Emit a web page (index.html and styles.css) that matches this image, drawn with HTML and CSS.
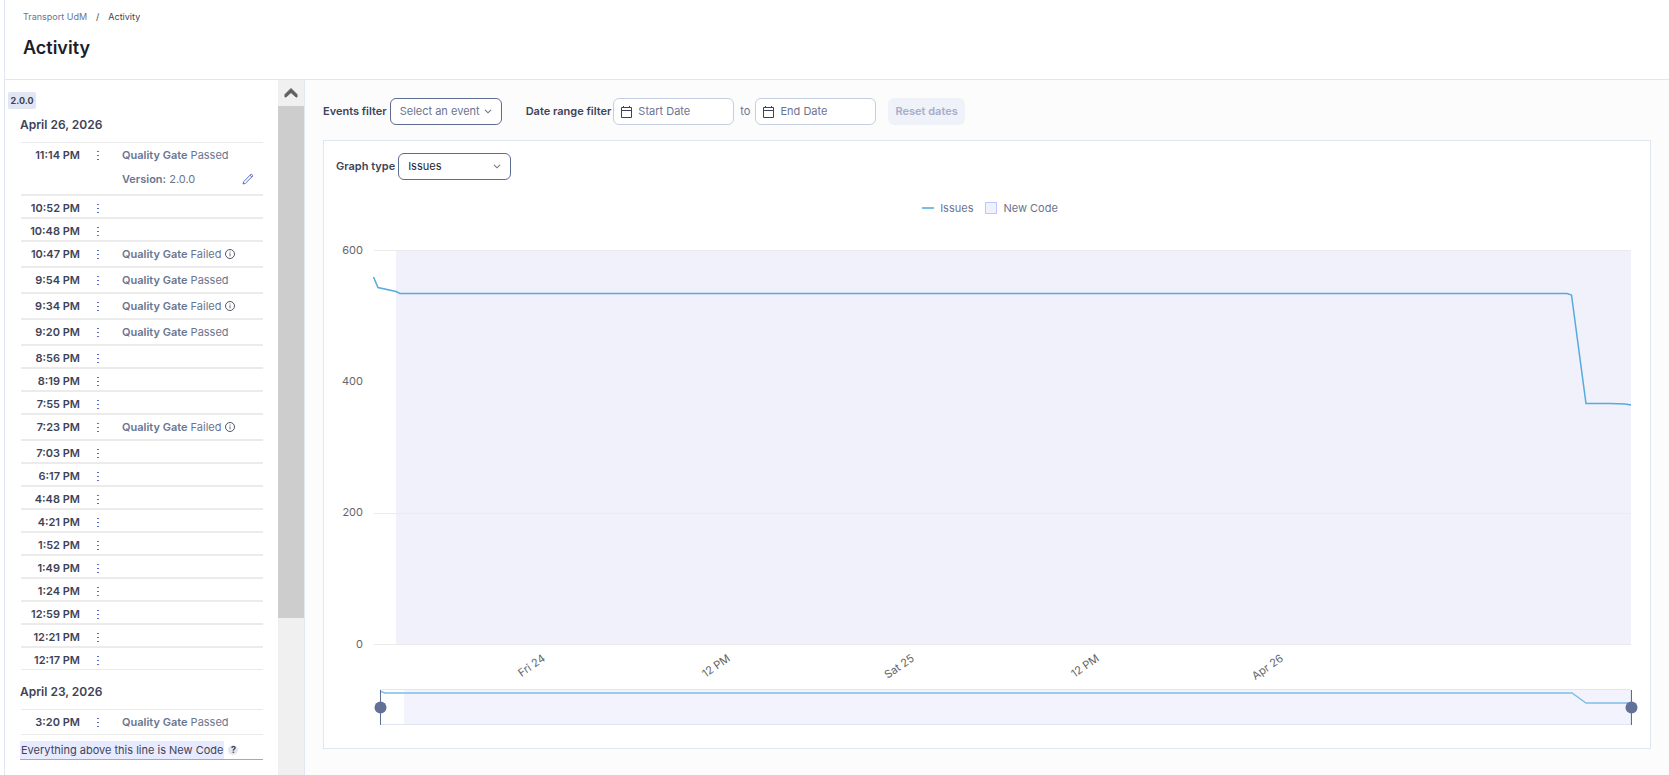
FILE: index.html
```html
<!DOCTYPE html>
<html lang="en">

<head>
    <meta charset="UTF-8">
    <title>Activity</title>
    <link rel="stylesheet" href="styles.css">
</head>

<body>
    <svg class="defs" aria-hidden="true">
        <symbol id="dots" viewBox="0 0 2 10">
            <rect x="0" y="0" width="2" height="1" />
            <rect x="0" y="4" width="2" height="1" />
            <rect x="0" y="8" width="2" height="1" />
        </symbol>
        <symbol id="info" viewBox="0 0 10 10">
            <circle cx="5" cy="5" r="4.500" fill="none" stroke="#3e4357" stroke-width=".9" />
            <path d="M5 4.300v3M5 2.500v1" stroke="#3e4357" stroke-width=".8" />
        </symbol>
        <symbol id="chevron" viewBox="0 0 8 5">
            <path d="M1 .8l3 3 3-3" fill="none" stroke="#6a7590" stroke-width="1.1" />
        </symbol>
        <symbol id="calendar" viewBox="0 0 12 12">
            <path d="M.5 1.5h10v10H.5zM.5 4.5h10M2.5 0v1.5M8.5 0v1.5" fill="none" stroke="#3e4357" />
        </symbol>
    </svg>

    <div class="page">
        <header class="header">
            <nav class="breadcrumbs">
                <a href="#">Transport UdM</a>
                <span class="slash">/</span>
                <a class="current" href="#">Activity</a>
            </nav>
            <h1>Activity</h1>
        </header>

        <div class="body">
            <aside class="sidebar">
                <div class="analyses">
                    <span class="version">2.0.0</span>
                    <h2>April 26, 2026</h2>
                    <ul id="day1"></ul>
                    <h2 class="later">April 23, 2026</h2>
                    <ul id="day2"></ul>
                    <div class="new-code">
                        <span class="new-code-text">Everything above this line is New Code</span>
                        <button class="help" type="button" aria-label="Help">?</button>
                    </div>
                </div>
                <div class="scrollbar">
                    <button class="scroll-up" type="button" aria-label="Scroll up">
                        <svg width="14" height="10" viewBox="0 0 14 10">
                            <path d="M1 9V6.500L7 .5l6 6V9h-1L7 4.500 2 9z" fill="#606060" stroke="#606060" />
                        </svg>
                    </button>
                    <div class="thumb"></div>
                </div>
            </aside>

            <main>
                <form class="filters">
                    <label for="events">Events filter</label>
                    <span class="select events">
                        <select id="events">
                            <option>Select an event</option>
                        </select>
                        <svg width="8" height="5"><use href="#chevron" /></svg>
                    </span>
                    <label class="range" for="start">Date range filter</label>
                    <span class="date">
                        <svg width="12" height="12"><use href="#calendar" /></svg>
                        <input id="start" type="text" placeholder="Start Date">
                    </span>
                    <label class="to" for="end">to</label>
                    <span class="date">
                        <svg width="12" height="12"><use href="#calendar" /></svg>
                        <input id="end" type="text" placeholder="End Date">
                    </span>
                    <button class="reset" type="button" disabled>Reset dates</button>
                </form>

                <section class="card">
                    <div class="graph-type">
                        <label for="graph">Graph type</label>
                        <span class="select graph">
                            <select id="graph">
                                <option>Issues</option>
                            </select>
                            <svg width="8" height="5"><use href="#chevron" /></svg>
                        </span>
                    </div>

                    <div class="legend">
                        <span class="key-line"></span>
                        <span>Issues</span>
                        <span class="key-box"></span>
                        <span>New Code</span>
                    </div>

                    <svg class="chart" viewBox="0 0 1326 520">
                        <rect class="leak" x="72" y="22" width="1235" height="394" />
                        <path class="grid" d="M50 22.500H1307M50 285.500H1307M50 416.500H1307" />
                        <g class="ticks-y">
                            <text x="39" y="26">600</text>
                            <text x="39" y="157">400</text>
                            <text x="39" y="288">200</text>
                            <text x="39" y="420">0</text>
                        </g>
                        <polyline class="line" points="49.500,49 54,59.500 72,63.500 76,65.500 1243,65.500 1247.500,67 1262,175.500 1286,175.500 1301,176 1307,177" />
                        <g class="ticks-x">
                            <text transform="translate(222 432) rotate(-35)">Fri 24</text>
                            <text transform="translate(407 432) rotate(-35)">12 PM</text>
                            <text transform="translate(591 432) rotate(-35)">Sat 25</text>
                            <text transform="translate(776 432) rotate(-35)">12 PM</text>
                            <text transform="translate(960 432) rotate(-35)">Apr 26</text>
                        </g>

                        <rect class="zoom-leak" x="80" y="461" width="1227" height="35" />
                        <rect class="zoom-frame" x="56.500" y="461.500" width="1250" height="35" />
                        <polyline class="zoom-line" points="57,463.500 61,465 1248,465 1262,475 1307,475" />
                        <path class="handle" d="M56.500 462v35M1307.500 462v35" />
                        <circle class="knob" cx="56.500" cy="479.500" r="6" />
                        <circle class="knob" cx="1307.500" cy="479.500" r="6" />
                    </svg>
                </section>
            </main>
        </div>
    </div>

    <script src="script.js"></script>
</body>

</html>
```
FILE: styles.css
```css
* {
    box-sizing: border-box;
    margin: 0;
    padding: 0;
}

body {
    font-family: Inter, "Liberation Sans", sans-serif;
    font-size: 11px;
    line-height: 16px;
    color: #3e4357;
    background: white;
}

button,
input,
select {
    font: inherit;
    border: none;
    background: none;
}

b {
    font-weight: 600;
}

a {
    color: #6a7590;
    text-decoration: none;
}

svg {
    display: block;
}

.defs {
    position: absolute;
    width: 0;
    height: 0;
}

.page {
    display: flex;
    flex-direction: column;
    min-height: 100vh;
    margin-left: 4px;
    border-left: 1px solid #e1e6f3;
}

.header {
    height: 80px;
    padding: 9px 18px 0;
    border-bottom: 1px solid #e1e6f3;
}

.breadcrumbs {
    display: flex;
    gap: 9px;
    font-size: 9px;
}

.breadcrumbs .current {
    color: #3e4357;
}

h1 {
    margin-top: 11px;
    font-size: 18px;
    line-height: 24px;
    font-weight: 600;
    color: #1b1d2b;
}

.body {
    display: flex;
    flex: 1;
}

/* analyses list */
.sidebar {
    display: flex;
    width: 300px;
    border-right: 1px solid #e1e6f3;
}

.analyses {
    flex: 1;
    padding: 12px 15px 0;
}

.version {
    display: block;
    width: 28px;
    margin-left: -12px;
    border-radius: 2px;
    background: #e1e6f3;
    font-size: 9px;
    line-height: 17px;
    font-weight: 700;
    text-align: center;
}

h2 {
    margin: 8px 0;
    font-size: 12px;
    line-height: 16px;
    font-weight: 600;
}

h2 + ul {
    margin-top: 9px;
}

h2.later {
    margin-top: 14px;
}

ul {
    list-style: none;
    margin-left: 1px;
}

.row {
    display: grid;
    grid-template-columns: 59px 35px 1fr;
    min-height: 23px;
    padding-top: 4px;
    border-top: 1px solid #ebebeb;
    border-bottom: 1px solid #ebebeb;
}

.row.event {
    padding-bottom: 4px;
}

.time {
    font-weight: 600;
    text-align: right;
}

.menu {
    justify-self: center;
    width: 10px;
    height: 16px;
    padding: 4px;
}

.menu svg {
    fill: #5d6cd0;
}

.gate,
.tag {
    display: flex;
    align-items: center;
    gap: 3px;
    margin-left: 7px;
    color: #6a7590;
}

.tag {
    grid-column: 3;
    margin: 8px 0 3px 7px;
    padding-right: 9px;
}

.edit {
    margin-left: auto;
}

.new-code {
    display: flex;
    align-items: center;
    gap: 4px;
    margin-top: 6px;
    border-bottom: 1px solid #9ba5ec;
}

.new-code-text {
    padding: 1px;
    background: #e8ebff;
    white-space: nowrap;
}

.help {
    width: 10px;
    height: 10px;
    border-radius: 5px;
    background: #e1e6f3;
    color: #3e4357;
    font-size: 9px;
    line-height: 10px;
    font-weight: 700;
}

.scrollbar {
    width: 26px;
    background: #f0f0f0;
}

.scroll-up {
    display: flex;
    align-items: center;
    justify-content: center;
    width: 26px;
    height: 26px;
}

.thumb {
    height: 512px;
    background: #cdcdcd;
}

/* filters and graph */
main {
    flex: 1;
    padding: 18px 18px 26px;
    background: #fcfcfd;
}

.filters,
.graph-type {
    display: flex;
    align-items: center;
}

label {
    padding-bottom: 2px;
    font-weight: 600;
}

.select,
.date {
    display: flex;
    align-items: center;
    position: relative;
    height: 27px;
    border: 1px solid #5d6c93;
    border-radius: 6px;
    background: white;
}

.select {
    margin-left: 3px;
}

.select select {
    width: 100%;
    height: 100%;
    padding: 0 0 2px 9px;
    appearance: none;
}

.select svg {
    position: absolute;
    right: 9px;
    pointer-events: none;
}

.events {
    width: 112px;
}

.events select {
    color: #6a7590;
}

.graph {
    width: 113px;
}

.graph select {
    color: #1b1d2b;
}

.range {
    margin: 0 2px 0 24px;
}

.date {
    width: 121px;
    gap: 5px;
    padding-left: 7px;
    border-color: #c5cde0;
}

.date input {
    width: 90px;
    padding-bottom: 2px;
    color: #3e4357;
}

.date input::placeholder {
    color: #6a7590;
    opacity: 1;
}

.to {
    margin: 0 5px 0 6px;
    color: #6a7590;
    font-weight: 400;
}

.reset {
    height: 27px;
    margin-left: 12px;
    padding: 0 7px 2px;
    border-radius: 6px;
    background: #eff2f9;
    color: #a6adc8;
    font-weight: 600;
}

.card {
    margin-top: 15px;
    padding-top: 12px;
    border: 1px solid #e1e6f3;
    background: white;
}

.graph-type {
    padding-left: 12px;
}

.legend {
    display: flex;
    align-items: center;
    justify-content: center;
    gap: 6px;
    margin-top: 20px;
    padding-left: 6px;
    color: #6a7590;
}

.key-line {
    width: 12px;
    height: 2px;
    background: #7bc0e4;
}

.key-box {
    width: 12px;
    height: 12px;
    margin-left: 6px;
    border: 1px solid #bdc6ff;
    background: #f1f1fb;
}

.chart {
    width: 100%;
    height: auto;
    margin-top: 12px;
}

.leak {
    fill: #f1f1fb;
}

.grid {
    fill: none;
    stroke: #ebebeb;
}

.line {
    fill: none;
    stroke: #56abdc;
    stroke-width: 1.500;
}

.ticks-y,
.ticks-x {
    fill: #666;
    font-size: 11px;
    text-anchor: end;
}

.zoom-leak {
    fill: #f3f3fd;
}

.zoom-frame {
    fill: none;
    stroke: #e1e6f3;
}

.zoom-line {
    fill: none;
    stroke: #7fbde6;
    stroke-width: 1.500;
}

.handle {
    stroke: #5d6c93;
}

.knob {
    fill: #647196;
}
```
FILE: script.js
```js
var day1 = [
    ["11:14 PM", "Passed", "2.0.0"],
    ["10:52 PM"],
    ["10:48 PM"],
    ["10:47 PM", "Failed"],
    ["9:54 PM", "Passed"],
    ["9:34 PM", "Failed"],
    ["9:20 PM", "Passed"],
    ["8:56 PM"],
    ["8:19 PM"],
    ["7:55 PM"],
    ["7:23 PM", "Failed"],
    ["7:03 PM"],
    ["6:17 PM"],
    ["4:48 PM"],
    ["4:21 PM"],
    ["1:52 PM"],
    ["1:49 PM"],
    ["1:24 PM"],
    ["12:59 PM"],
    ["12:21 PM"],
    ["12:17 PM"]
];
var day2 = [["3:20 PM", "Passed"]];

function show_rows(id, rows) {
    var html = "";
    rows.forEach(function (row) {
        html += '<li class="row' + (row[1] ? " event" : "") + '">' +
            '<time class="time">' + row[0] + '</time>' +
            '<button class="menu" type="button" aria-label="Actions"><svg width="2" height="10"><use href="#dots"/></svg></button>';
        if (row[1]) {
            html += '<div class="gate"><span><b>Quality Gate</b> ' + row[1] + '</span>';
            if (row[1] === "Failed") {
                html += '<svg width="10" height="10"><use href="#info"/></svg>';
            }
            html += '</div>';
        }
        if (row[2]) {
            html += '<div class="tag"><span><b>Version:</b> ' + row[2] + '</span>' +
                '<button class="edit" type="button" aria-label="Edit version">' +
                '<svg width="12" height="12" viewBox="0 0 12 12">' +
                '<path d="M1 11l.7-2.300L9.200 1l1.800 1.800-7.600 7.500zM8 2.200l1.800 1.800" fill="none" stroke="#5d6cd0"/></svg></button></div>';
        }
        html += '</li>';
    });
    document.getElementById(id).innerHTML = html;
}

show_rows("day1", day1);
show_rows("day2", day2);
```
